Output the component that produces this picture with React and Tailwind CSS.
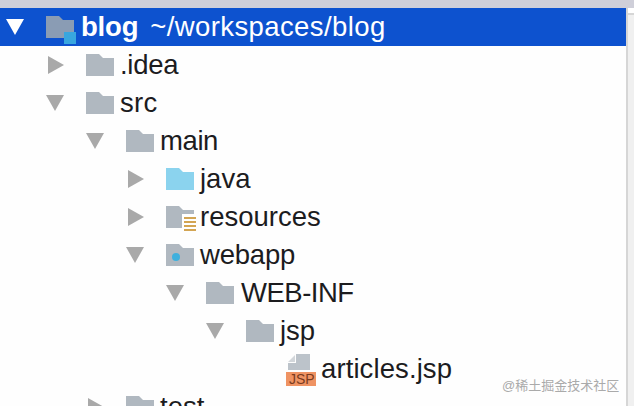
const FOLDER = "M0 0H13L17 4H28V22H0Z";

function Arrow({ dir, color = "#a9a9a9" }) {
  return (
    <svg width="18" height="18" viewBox="0 0 18 18" className="block">
      {dir === "down" ? (
        <path d="M0 1H18L9 17Z" fill={color} />
      ) : dir === "right" ? (
        <path d="M0 0L16 9L0 18Z" fill={color} />
      ) : null}
    </svg>
  );
}

function Icon({ kind }) {
  if (kind === "file") {
    return (
      <svg width="30" height="32" viewBox="0 0 30 32" className="block overflow-visible mt-[2px]">
        <path d="M2 8H9V1Z" fill="#d3d7db" />
        <path d="M10 0H24V16H10Z" fill="#bcc3ca" />
        <path d="M2 9H10V16H2Z" fill="#bcc3ca" />
        <rect x="0" y="18" width="30" height="14" fill="#ef9363" />
      </svg>
    );
  }
  const fill = kind === "root" ? "#8a9cb4" : kind === "source" ? "#8bd3ee" : "#b0b8c0";
  return (
    <svg width="28" height="22" viewBox="0 0 28 22" className="block overflow-visible">
      <path d={FOLDER} fill={fill} />
      {kind === "root" && <rect x="18" y="16" width="12" height="12" fill="#38a6df" />}
      {kind === "res" && (
        <g>
          <rect x="16" y="8" width="14" height="16" fill="#ffffff" />
          <path d="M18 11H30V13H18ZM18 15H30V17H18ZM18 19H30V21H18ZM18 23H30V25H18Z" fill="#d3a553" />
        </g>
      )}
      {kind === "web" && <circle cx="10" cy="13" r="4" fill="#3fb0dd" />}
    </svg>
  );
}

const rows = [
  { pad: "pl-[48px]", arrow: "right", icon: "folder", label: ".idea", text: "tracking-[-0.3px]" },
  { pad: "pl-[46px]", arrowW: "w-[40px]", arrow: "down", icon: "folder", label: "src", text: "tracking-[0.3px]" },
  { pad: "pl-[86px]", arrowW: "w-[40px]", arrow: "down", icon: "folder", label: "main", text: "tracking-[-0.4px]" },
  { pad: "pl-[128px]", arrow: "right", icon: "source", label: "java" },
  { pad: "pl-[128px]", arrow: "right", icon: "res", label: "resources" },
  { pad: "pl-[126px]", arrowW: "w-[40px]", arrow: "down", icon: "web", label: "webapp", text: "tracking-[-0.2px]" },
  { pad: "pl-[166px]", arrowW: "w-[40px]", arrow: "down", icon: "folder", label: "WEB-INF", text: "tracking-[-0.5px] ml-[1px]" },
  { pad: "pl-[206px]", arrowW: "w-[40px]", arrow: "down", icon: "folder", label: "jsp" },
  { pad: "pl-[248px]", arrow: null, icon: "file", label: "articles.jsp", text: "tracking-[0.1px] ml-[1px]" },
  { pad: "pl-[88px]", arrow: "right", icon: "folder", label: "test" },
];

export default function App() {
  return (
    <div className="relative w-[634px] h-[406px] overflow-hidden bg-[#fefefe] font-['Liberation_Sans',sans-serif] text-[27.5px] text-[#1c1c1e]">
      <div className="h-[8px] bg-[#cfcfd9]" />
      <div className="flex">
        <div className="w-[626px] shrink-0">
          <div className="h-[38px] flex items-center pl-[6px] bg-[#0d52cf] text-white">
            <div className="w-[40px]"><Arrow dir="down" color="#ffffff" /></div>
            <div className="w-[35px]"><Icon kind="root" /></div>
            <span className="font-bold tracking-[-0.2px]">blog</span>
            <span className="ml-[12px] tracking-[0.4px]">~/workspaces/blog</span>
          </div>
          {rows.map((r) => (
            <div key={r.label} className={`h-[38px] flex items-center ${r.pad}`}>
              <div className={r.arrowW || "w-[38px]"}>{r.arrow && <Arrow dir={r.arrow} />}</div>
              <div className="w-[34px]">
                {r.icon === "file" ? (
                  <div className="relative">
                    <Icon kind="file" />
                    <span className="absolute left-[3px] bottom-[0px] text-[14px] leading-[14px] text-[#7a3b1e]">JSP</span>
                  </div>
                ) : (
                  <Icon kind={r.icon} />
                )}
              </div>
              <span className={r.text || ""}>{r.label}</span>
            </div>
          ))}
        </div>
        <div className="w-[8px] h-[398px] shrink-0 border-l-2 border-[#d6d6d6] bg-[#f0f0f0]">
          <div className="h-[7px] bg-white border-b-2 border-[#d6d6d6]" />
        </div>
      </div>
      <span className="absolute left-[502px] top-[377px] text-[13px] leading-[18px] text-[#aaaaaa] font-['Liberation_Sans','Noto_Sans_CJK_SC',sans-serif]">@稀土掘金技术社区</span>
    </div>
  );
}
